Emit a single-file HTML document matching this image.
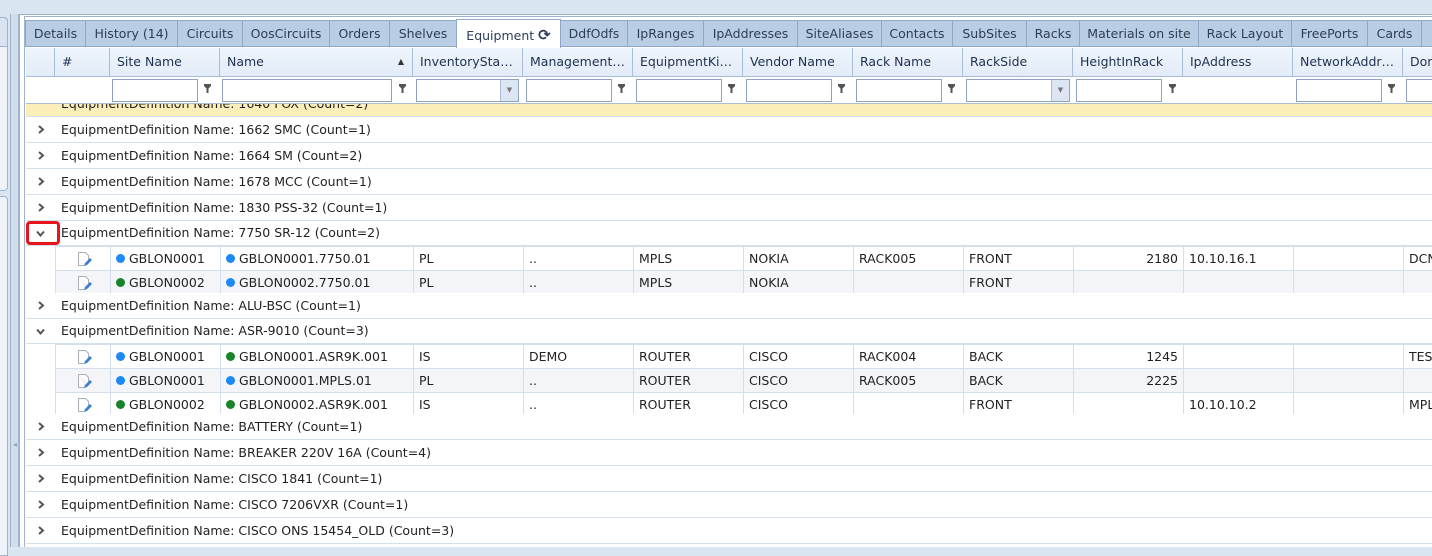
<!DOCTYPE html>
<html><head><meta charset="utf-8">
<style>
*{box-sizing:border-box;margin:0;padding:0}
body{width:1432px;height:547px;overflow:hidden;background:#dae5f2;font-family:"DejaVu Sans","Liberation Sans",sans-serif;font-size:12px;color:#222;position:relative}
.a{position:absolute}
.tab{position:absolute;top:20px;height:26px;background:#b9cde5;border:1px solid #8fa8c8;border-bottom:none;color:#2d3e57;font-size:12.5px;line-height:26px;text-align:center;white-space:nowrap}
.hd{position:absolute;top:48px;height:29px;border-right:1px solid #a9bdd6;border-bottom:1px solid #a9bdd6;color:#1f3050;font-size:12.5px;line-height:28px;padding-left:7px;white-space:nowrap;overflow:hidden;background:linear-gradient(#eef4fb,#e2ecf8)}
.inp{position:absolute;top:79px;height:23px;border:1px solid #8fa3bf;background:#fff}
.fil{position:absolute;top:84px;width:7px;height:9px}
.g{position:absolute;left:26px;width:1406px;height:26px;border-bottom:1px solid #d5dfec;background:#fff;line-height:25px;padding-left:35px;white-space:nowrap;font-size:12.5px}
.chev{position:absolute;left:11px;top:8px;width:8px;height:9px}
table{position:absolute;left:55px;border-collapse:collapse;table-layout:fixed;font-size:12.5px}
td{border:1px solid #d5dfec;height:24px;padding:0 5px;white-space:nowrap;overflow:hidden}
tr.alt td{background:#f3f5f9}
.d{display:inline-block;width:9px;height:9px;border-radius:50%;margin-right:4px;vertical-align:-0px}
.b{background:#1e88f5}.gr{background:#17832a}
.r{text-align:right}
</style></head><body>
<!-- left panel -->
<div class="a" style="left:-4px;top:17px;width:12px;height:174px;border:1px solid #9fb3cd;border-radius:0 4px 4px 0;background:#eef3f9"></div>
<div class="a" style="left:-4px;top:17px;width:12px;height:30px;border:1px solid #9fb3cd;border-radius:0 4px 0 0;background:#d9e3ef"></div>
<div class="a" style="left:-4px;top:196px;width:12px;height:360px;border:1px solid #9fb3cd;border-radius:0 4px 0 0;background:#eef3f9"></div>
<div class="a" style="left:10px;top:14px;width:9px;height:533px;background:#d2ddea;border-left:1px solid #9fb3cd;border-right:1px solid #9fb3cd"></div>
<div class="a" style="left:13px;top:440px;font-size:8px;color:#8fa3bf">◂</div>
<div class="a" style="left:19px;top:14px;width:1413px;height:533px;background:#fff;border-left:1px solid #9fb3cd;border-top:1px solid #9fb3cd"></div>
<div class="a" style="left:24px;top:16px;width:1408px;height:531px;background:#fff;border-left:1px solid #9fb3cd;border-top:1px solid #9fb3cd"></div>
<div class="a" style="left:25px;top:17px;width:1407px;height:30px;background:#fff;border-bottom:1px solid #8fa8c8"></div>
<!-- tabs -->
<div class="tab" style="left:25px;width:61px">Details</div>
<div class="tab" style="left:85px;width:93px">History (14)</div>
<div class="tab" style="left:177px;width:66px">Circuits</div>
<div class="tab" style="left:242px;width:88px">OosCircuits</div>
<div class="tab" style="left:329px;width:61px">Orders</div>
<div class="tab" style="left:389px;width:68px">Shelves</div>
<div class="tab" style="left:456px;width:105px;top:19px;height:29px;background:#fff;line-height:30px">Equipment <b style="font-size:15px">⟳</b></div>
<div class="tab" style="left:560px;width:68px">DdfOdfs</div>
<div class="tab" style="left:627px;width:77px">IpRanges</div>
<div class="tab" style="left:703px;width:95px">IpAddresses</div>
<div class="tab" style="left:797px;width:85px">SiteAliases</div>
<div class="tab" style="left:881px;width:72px">Contacts</div>
<div class="tab" style="left:952px;width:75px">SubSites</div>
<div class="tab" style="left:1026px;width:54px">Racks</div>
<div class="tab" style="left:1079px;width:120px">Materials on site</div>
<div class="tab" style="left:1198px;width:94px">Rack Layout</div>
<div class="tab" style="left:1291px;width:77px">FreePorts</div>
<div class="tab" style="left:1367px;width:55px">Cards</div>
<div class="tab" style="left:1421px;width:20px"></div>
<!-- partial yellow row + cover (under filters) -->
<div class="g" style="top:91px;height:26px;background:#fbeeb8;padding-top:0">EquipmentDefinition Name: 1640 FOX (Count=2)</div>
<div class="a" style="left:26px;top:77px;width:1406px;height:27px;background:#fff"></div>
<!-- header -->
<div class="hd" style="left:26px;width:29px"></div>
<div class="hd" style="left:55px;width:55px">#</div>
<div class="hd" style="left:110px;width:110px">Site Name</div>
<div class="hd" style="left:220px;width:193px">Name<span style="position:absolute;right:8px;font-size:8px;color:#333">▲</span></div>
<div class="hd" style="left:413px;width:110px">InventorySta…</div>
<div class="hd" style="left:523px;width:110px">Management…</div>
<div class="hd" style="left:633px;width:110px">EquipmentKi…</div>
<div class="hd" style="left:743px;width:110px">Vendor Name</div>
<div class="hd" style="left:853px;width:110px">Rack Name</div>
<div class="hd" style="left:963px;width:110px">RackSide</div>
<div class="hd" style="left:1073px;width:110px">HeightInRack</div>
<div class="hd" style="left:1183px;width:110px">IpAddress</div>
<div class="hd" style="left:1293px;width:110px">NetworkAddr…</div>
<div class="hd" style="left:1403px;width:40px">Dom</div>
<div class="a" style="left:26px;top:103px;width:1406px;height:1px;background:#a9bdd6"></div>
<!-- filters -->
<svg width="0" height="0" style="position:absolute"><defs><symbol id="f" viewBox="0 0 7 9"><path d="M0 0h7v2L4.5 4.5V9h-2V4.5L0 2z" fill="#555"/></symbol></defs></svg>
<div class="inp" style="left:112px;width:86px"></div><svg class="fil" style="left:204px"><use href="#f"/></svg>
<div class="inp" style="left:222px;width:170px"></div><svg class="fil" style="left:399px"><use href="#f"/></svg>
<div class="inp" style="left:416px;width:103px"><div style="position:absolute;right:0;top:0;width:18px;height:21px;background:#dce6f2;border-left:1px solid #a9bdd6;font-size:7px;color:#777;text-align:center;line-height:21px">▼</div></div>
<div class="inp" style="left:526px;width:86px"></div><svg class="fil" style="left:618px"><use href="#f"/></svg>
<div class="inp" style="left:636px;width:86px"></div><svg class="fil" style="left:728px"><use href="#f"/></svg>
<div class="inp" style="left:746px;width:86px"></div><svg class="fil" style="left:838px"><use href="#f"/></svg>
<div class="inp" style="left:856px;width:86px"></div><svg class="fil" style="left:948px"><use href="#f"/></svg>
<div class="inp" style="left:966px;width:104px"><div style="position:absolute;right:0;top:0;width:18px;height:21px;background:#dce6f2;border-left:1px solid #a9bdd6;font-size:7px;color:#777;text-align:center;line-height:21px">▼</div></div>
<div class="inp" style="left:1076px;width:86px"></div><svg class="fil" style="left:1169px"><use href="#f"/></svg>
<div class="inp" style="left:1296px;width:86px"></div><svg class="fil" style="left:1388px"><use href="#f"/></svg>
<div class="inp" style="left:1406px;width:40px"></div>
<!-- rows -->
<svg width="0" height="0" style="position:absolute"><defs>
<symbol id="c" viewBox="0 0 8 9"><path d="M2 1l4 3.5L2 8" stroke="#555" stroke-width="2" fill="none"/></symbol>
<symbol id="cd" viewBox="0 0 9 8"><path d="M1 2l3.5 4L8 2" stroke="#555" stroke-width="2" fill="none"/></symbol>
<symbol id="e" viewBox="0 0 16 16"><path d="M2.5 1.5h7l3 3v5M2.5 1.5v13h6" stroke="#a8aeb6" fill="#fff"/><path d="M8 15l1-3 5-5 2 2-5 5z" fill="#3f7fd0"/></symbol>
</defs></svg>
<div class="g" style="top:117px"><svg class="chev"><use href="#c"/></svg>EquipmentDefinition Name: 1662 SMC (Count=1)</div>
<div class="g" style="top:143px"><svg class="chev"><use href="#c"/></svg>EquipmentDefinition Name: 1664 SM (Count=2)</div>
<div class="g" style="top:169px"><svg class="chev"><use href="#c"/></svg>EquipmentDefinition Name: 1678 MCC (Count=1)</div>
<div class="g" style="top:195px"><svg class="chev"><use href="#c"/></svg>EquipmentDefinition Name: 1830 PSS-32 (Count=1)</div>
<div class="g" style="top:221px;height:25px;line-height:24px"><svg class="chev" style="left:10px;top:8px;width:9px"><use href="#cd"/></svg>EquipmentDefinition Name: 7750 SR-12 (Count=2)</div>
<div class="a" style="left:26px;top:221px;width:34px;height:24px;border:3px solid #e8141b;border-radius:4px"></div>
<table style="top:246px;width:1390px"><colgroup><col style="width:55px"><col style="width:110px"><col style="width:193px"><col style="width:110px"><col style="width:110px"><col style="width:110px"><col style="width:110px"><col style="width:110px"><col style="width:110px"><col style="width:110px"><col style="width:110px"><col style="width:110px"><col style="width:42px"></colgroup>
<tr><td style="text-align:center"><svg width="16" height="16" style="vertical-align:middle;margin-left:2px"><use href="#e"/></svg></td><td><span class="d b"></span>GBLON0001</td><td><span class="d b"></span>GBLON0001.7750.01</td><td>PL</td><td>..</td><td>MPLS</td><td>NOKIA</td><td>RACK005</td><td>FRONT</td><td class="r">2180</td><td>10.10.16.1</td><td></td><td>DCN</td></tr>
<tr class="alt"><td style="text-align:center"><svg width="16" height="16" style="vertical-align:middle;margin-left:2px"><use href="#e"/></svg></td><td><span class="d gr"></span>GBLON0002</td><td><span class="d b"></span>GBLON0002.7750.01</td><td>PL</td><td>..</td><td>MPLS</td><td>NOKIA</td><td></td><td>FRONT</td><td></td><td></td><td></td><td></td></tr>
</table>
<div class="g" style="top:293px"><svg class="chev"><use href="#c"/></svg>EquipmentDefinition Name: ALU-BSC (Count=1)</div>
<div class="g" style="top:319px;height:25px;line-height:24px"><svg class="chev" style="left:10px;top:8px;width:9px"><use href="#cd"/></svg>EquipmentDefinition Name: ASR-9010 (Count=3)</div>
<table style="top:344px;width:1390px"><colgroup><col style="width:55px"><col style="width:110px"><col style="width:193px"><col style="width:110px"><col style="width:110px"><col style="width:110px"><col style="width:110px"><col style="width:110px"><col style="width:110px"><col style="width:110px"><col style="width:110px"><col style="width:110px"><col style="width:42px"></colgroup>
<tr><td style="text-align:center;height:23px"><svg width="16" height="16" style="vertical-align:middle;margin-left:2px"><use href="#e"/></svg></td><td><span class="d b"></span>GBLON0001</td><td><span class="d gr"></span>GBLON0001.ASR9K.001</td><td>IS</td><td>DEMO</td><td>ROUTER</td><td>CISCO</td><td>RACK004</td><td>BACK</td><td class="r">1245</td><td></td><td></td><td>TEST</td></tr>
<tr class="alt"><td style="text-align:center;height:23px"><svg width="16" height="16" style="vertical-align:middle;margin-left:2px"><use href="#e"/></svg></td><td><span class="d b"></span>GBLON0001</td><td><span class="d b"></span>GBLON0001.MPLS.01</td><td>PL</td><td>..</td><td>ROUTER</td><td>CISCO</td><td>RACK005</td><td>BACK</td><td class="r">2225</td><td></td><td></td><td></td></tr>
<tr><td style="text-align:center;height:23px"><svg width="16" height="16" style="vertical-align:middle;margin-left:2px"><use href="#e"/></svg></td><td><span class="d gr"></span>GBLON0002</td><td><span class="d gr"></span>GBLON0002.ASR9K.001</td><td>IS</td><td>..</td><td>ROUTER</td><td>CISCO</td><td></td><td>FRONT</td><td></td><td>10.10.10.2</td><td></td><td>MPLS</td></tr>
</table>
<div class="g" style="top:414px"><svg class="chev"><use href="#c"/></svg>EquipmentDefinition Name: BATTERY (Count=1)</div>
<div class="g" style="top:440px"><svg class="chev"><use href="#c"/></svg>EquipmentDefinition Name: BREAKER 220V 16A (Count=4)</div>
<div class="g" style="top:466px"><svg class="chev"><use href="#c"/></svg>EquipmentDefinition Name: CISCO 1841 (Count=1)</div>
<div class="g" style="top:492px"><svg class="chev"><use href="#c"/></svg>EquipmentDefinition Name: CISCO 7206VXR (Count=1)</div>
<div class="g" style="top:518px"><svg class="chev"><use href="#c"/></svg>EquipmentDefinition Name: CISCO ONS 15454_OLD (Count=3)</div>
</body></html>
